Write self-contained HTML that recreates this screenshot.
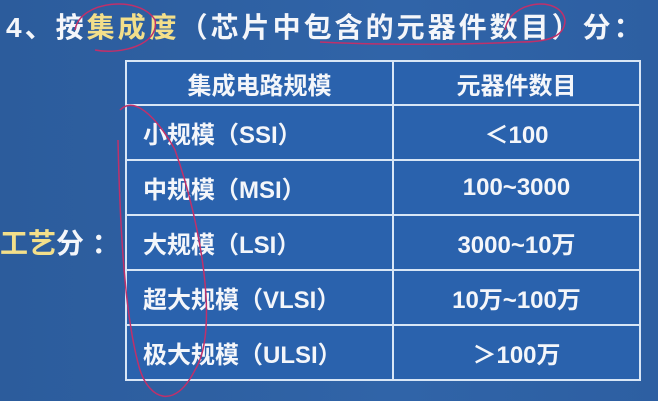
<!DOCTYPE html>
<html><head><meta charset="utf-8"><style>
body{margin:0;width:658px;height:401px;overflow:hidden;background:linear-gradient(90deg,#2c5c9c,#3064a8 60%,#2d5fa2);font-family:"Liberation Sans","Noto Sans CJK SC",sans-serif;font-weight:bold;color:#f4f6fa;position:relative}
.t{position:absolute;left:6px;top:8px;font-size:28px;white-space:nowrap;letter-spacing:3px;line-height:40px}
.y{color:#f3df8a}
table{position:absolute;left:125px;top:60px;width:516px;border-collapse:collapse;border:2px solid #d8e6f6}
td{border:2px solid #d8e6f6;font-size:24px;background:#2a62ad;padding:0}
td.l{padding-left:16px;width:249px}
td.r{text-align:center}
tr.h td{height:42px;text-align:center;padding-left:0}
tr.d td{height:53px}
.s{position:absolute;font-size:28px;left:0;top:222px}
</style></head><body>
<div class="t">4、按<span class="y">集成度</span>（芯片中包含的元器件数目）分：</div>
<div class="s"><span class="y">工艺</span>分 ：</div>
<table>
<tr class="h"><td>集成电路规模</td><td>元器件数目</td></tr>
<tr class="d"><td class="l">小规模（SSI）</td><td class="r">＜100</td></tr>
<tr class="d"><td class="l">中规模（MSI）</td><td class="r">100~3000</td></tr>
<tr class="d"><td class="l">大规模（LSI）</td><td class="r">3000~10万</td></tr>
<tr class="d"><td class="l">超大规模（VLSI）</td><td class="r">10万~100万</td></tr>
<tr class="d"><td class="l">极大规模（ULSI）</td><td class="r">＞100万</td></tr>
</table>
<svg style="position:absolute;left:0;top:0" width="658" height="401" fill="none" stroke="#c0306a" stroke-width="1.5">
<path d="M75 30 C80 0,140 -5,155 20 C160 45,120 55,95 50"/>
<path d="M505 30 C510 0,560 -5,565 20 C565 40,540 42,520 42 M320 42 C380 45,450 45,520 42"/>
<path d="M120 110 C140 90,170 140,175 150 C200 220,220 330,195 370 C175 410,150 400,140 370 C125 320,120 230,118 140"/>
</svg>
</body></html>
